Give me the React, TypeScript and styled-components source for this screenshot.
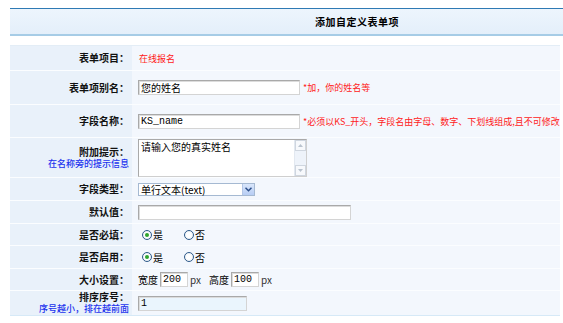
import React from "react";
import styled, { createGlobalStyle } from "styled-components";

const Global = createGlobalStyle`
  html, body { margin: 0; padding: 0; background: #fff; }
  body { font-family: "Noto Sans CJK SC", "Noto Sans", sans-serif; font-size: 10px; color: #000; overflow: hidden; }
`;

const Page = styled.div`
  padding: 8px 0 0 10px;
  width: 553px;
`;

const Header = styled.div`
  height: 25px;
  border-top: 1px solid #2f7ab4;
  border-bottom: 2px solid #a6cce6;
  background: linear-gradient(#edf5fd, #e4effa);
  display: flex;
  align-items: center;
  padding-left: 305px;
  font-weight: bold;
  font-size: 10px;
  letter-spacing: 0.5px;
`;

const Table = styled.div`
  margin-top: 9px;
  width: 550px;
  border-top: 1px solid #e3edf6;
  border-bottom: 1px solid #d6e9f7;
  display: flex;
  flex-direction: column;
  gap: 1px;
  background: #fbfdff;
`;

const Row = styled.div<{ $h: number }>`
  display: grid;
  grid-template-columns: 122px 1fr;
  height: ${(p) => p.$h}px;
`;

const LabelCell = styled.div`
  background: #e9f1fa;
  display: flex;
  flex-direction: column;
  justify-content: center;
  align-items: flex-end;
  padding-right: 3px;
`;

const Label = styled.span`
  display: block;
  font-weight: bold;
  font-size: 10px;
  line-height: 12px;
  color: #111;
  white-space: nowrap;
`;

const SubLabel = styled.span`
  display: block;
  font-size: 9px;
  line-height: 12px;
  color: #2233ee;
  font-weight: 500;
  white-space: nowrap;
`;

const ValueCell = styled.div`
  background: #f3f7fd;
  display: flex;
  align-items: center;
  padding-left: 6px;
  gap: 2px;
  white-space: nowrap;
  overflow: hidden;
`;

const RedText = styled.span`
  color: #ff1a1a;
  font-size: 9px;
  margin-left: 1px;
  white-space: nowrap;
`;

const TextBox = styled.input<{ $w: number; $bg?: string }>`
  box-sizing: border-box;
  flex: none;
  width: ${(p) => p.$w}px;
  height: 15px;
  border: 1px solid #a9a9a9;
  border-right-color: #d4d4d4;
  border-bottom-color: #d4d4d4;
  box-shadow: inset 1px 1px 0 #dcdcdc;
  background: ${(p) => p.$bg || "#fff"};
  padding: 0 2px;
  margin: 0;
  font-family: "Liberation Mono", "Noto Sans CJK SC", monospace;
  font-size: 10px;
  color: #000;
  outline: none;
`;

const AreaWrap = styled.div`
  box-sizing: border-box;
  width: 169px;
  height: 38px;
  margin-top: 1px;
  border: 1px solid #a9a9a9;
  border-right-color: #cfcfcf;
  border-bottom-color: #cfcfcf;
  background: #fff;
  display: flex;
`;

const Area = styled.textarea`
  flex: 1;
  border: none;
  resize: none;
  outline: none;
  padding: 1px 2px;
  margin: 0;
  font-family: "Noto Sans CJK SC", sans-serif;
  font-size: 10px;
  line-height: 12px;
  overflow: hidden;
  background: #fff;
`;

const ScrollBar = styled.div`
  width: 11px;
  background: #eef3fa;
  display: flex;
  flex-direction: column;
  justify-content: space-between;
  border-left: 1px solid #e2e8f0;
`;

const ScrollBtn = styled.div`
  height: 11px;
  box-sizing: border-box;
  border: 1px solid #cfd6df;
  background: #f7f9fc;
  display: flex;
  align-items: center;
  justify-content: center;
`;

const SelectBox = styled.div`
  box-sizing: border-box;
  width: 117px;
  height: 13px;
  border: 1px solid #a5b9d2;
  background: #fff;
  display: flex;
  align-items: center;
  justify-content: space-between;
  font-size: 10px;
  padding-left: 2px;
`;

const SelectBtn = styled.div`
  width: 11px;
  height: 11px;
  background: linear-gradient(#d9e6fb, #b7cdf4);
  border-left: 1px solid #b3c6e6;
  display: flex;
  align-items: center;
  justify-content: center;
`;

const RadioGroup = styled.div`
  display: flex;
  align-items: center;
  gap: 21px;
  padding-left: 4px;
`;

const RadioItem = styled.label`
  display: flex;
  align-items: center;
  gap: 1px;
  font-size: 10px;
`;

const RadioCircle = styled.span<{ $on?: boolean }>`
  box-sizing: border-box;
  width: 10px;
  height: 10px;
  border-radius: 50%;
  border: 1px solid #2e5a8a;
  background: radial-gradient(circle, #fff 40%, #dde6ee 100%);
  display: flex;
  align-items: center;
  justify-content: center;
  &::after {
    content: "";
    width: 4px;
    height: 4px;
    border-radius: 50%;
    background: ${(p) => (p.$on ? "#2ea42e" : "transparent")};
  }
`;

const Unit = styled.span`
  font-size: 10px;
  color: #333;
  margin-right: 6px;
`;

const Plain = styled.span`
  font-size: 10px;
`;

type FieldProps = { h: number; label: string; sub?: string; children: React.ReactNode };

const Field = ({ h, label, sub, children }: FieldProps) => (
  <Row $h={h}>
    <LabelCell>
      <Label>{label}</Label>
      {sub && <SubLabel>{sub}</SubLabel>}
    </LabelCell>
    <ValueCell>{children}</ValueCell>
  </Row>
);

const Radio = ({ yes }: { yes: boolean }) => (
  <RadioGroup>
    <RadioItem>
      <RadioCircle $on={yes} />是
    </RadioItem>
    <RadioItem>
      <RadioCircle $on={!yes} />否
    </RadioItem>
  </RadioGroup>
);

export default function App() {
  return (
    <>
      <Global />
      <Page>
        <Header>添加自定义表单项</Header>
        <Table>
          <Field h={24} label="表单项目：">
            <RedText>在线报名</RedText>
          </Field>
          <Field h={33} label="表单项别名：">
            <TextBox $w={162} defaultValue="您的姓名" />
            <RedText>*加，你的姓名等</RedText>
          </Field>
          <Field h={32} label="字段名称：">
            <TextBox $w={162} defaultValue="KS_name" />
            <RedText>*必须以KS_开头，字段名由字母、数字、下划线组成,且不可修改</RedText>
          </Field>
          <Field h={39} label="附加提示：" sub="在名称旁的提示信息">
            <AreaWrap>
              <Area defaultValue="请输入您的真实姓名" />
              <ScrollBar>
                <ScrollBtn>
                  <svg width="5" height="3" viewBox="0 0 5 3"><path d="M0 3L2.5 0L5 3Z" fill="#b9c3cf" /></svg>
                </ScrollBtn>
                <ScrollBtn>
                  <svg width="5" height="3" viewBox="0 0 5 3"><path d="M0 0L2.5 3L5 0Z" fill="#b9c3cf" /></svg>
                </ScrollBtn>
              </ScrollBar>
            </AreaWrap>
          </Field>
          <Field h={22} label="字段类型：">
            <SelectBox>
              单行文本(text)
              <SelectBtn>
                <svg width="7" height="5" viewBox="0 0 7 5"><path d="M0.5 0.8L3.5 3.8L6.5 0.8" stroke="#2c4f8a" strokeWidth="1.5" fill="none" /></svg>
              </SelectBtn>
            </SelectBox>
          </Field>
          <Field h={22} label="默认值：">
            <TextBox $w={213} />
          </Field>
          <Field h={21} label="是否必填：">
            <Radio yes />
          </Field>
          <Field h={22} label="是否启用：">
            <Radio yes />
          </Field>
          <Field h={21} label="大小设置：">
            <Plain>宽度</Plain>
            <TextBox $w={28} defaultValue="200" />
            <Unit>px</Unit>
            <Plain>高度</Plain>
            <TextBox $w={28} defaultValue="100" />
            <Unit>px</Unit>
          </Field>
          <Field h={24} label="排序序号：" sub="序号越小，排在越前面">
            <TextBox $w={109} $bg="#eaf5fd" defaultValue="1" />
          </Field>
        </Table>
      </Page>
    </>
  );
}
